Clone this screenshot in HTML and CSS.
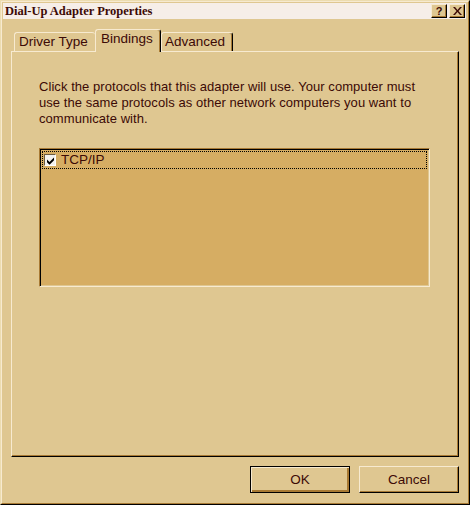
FILE: index.html
```html
<!DOCTYPE html>
<html>
<head>
<meta charset="utf-8">
<link rel="stylesheet" href="styles.css">
</head>
<body>
<div class="window">
  <div class="frame">
    <div class="titlebar">
      <span class="title">Dial-Up Adapter Properties</span>
      <div class="tbtns">
        <span class="tbtn help">?</span>
        <span class="tbtn close"><svg width="9" height="8" viewBox="0 0 9 8"><path d="M0 0h2l2.5 3 2.5-3h2l-3.5 4 3.5 4h-2l-2.5-3-2.5 3h-2l3.5-4z" fill="#3c0a06"/></svg></span>
      </div>
    </div>
    <div class="tabs">
      <div class="tab t1">Driver Type</div>
      <div class="tab sel">Bindings</div>
      <div class="tab t3">Advanced</div>
    </div>
    <div class="panel">
      <p class="desc">Click the protocols that this adapter will use. Your computer must use the same protocols as other network computers you want to communicate with.</p>
      <div class="listbox">
        <div class="item">
          <span class="check"><svg width="9" height="9" viewBox="0 0 9 9"><path d="M1 3.5l2.5 2.5 4.5-4.5v2.7l-4.5 4.5-2.5-2.5z" fill="#000"/></svg></span>
          <span class="label">TCP/IP</span>
        </div>
      </div>
    </div>
    <div class="buttons">
      <div class="btn default"><span>OK</span></div>
      <div class="btn"><span>Cancel</span></div>
    </div>
  </div>
</div>
</body>
</html>
```
FILE: styles.css
```css
html, body {
  margin: 0;
  padding: 0;
  background: #dfc791;
}
body {
  font-family: "Liberation Sans", Arial, sans-serif;
  font-size: 13px;
  color: #3c0a06;
}
.window {
  width: 470px;
  height: 505px;
  box-sizing: border-box;
  background: #dfc791;
  border-style: solid;
  border-width: 1px;
  border-color: #ecdcb0 #000 #000 #ecdcb0;
}
.frame {
  height: 100%;
  box-sizing: border-box;
  border-style: solid;
  border-width: 1px;
  border-color: #f7ead0 #a87a34 #a87a34 #f7ead0;
  padding: 1px;
  display: flex;
  flex-direction: column;
}
.titlebar {
  height: 16px;
  width: 463px;
  background: #f6eee8;
  display: flex;
  align-items: center;
  justify-content: space-between;
}
.title {
  font-family: "Liberation Serif", "Times New Roman", serif;
  font-weight: bold;
  font-size: 12.5px;
  color: #3c0a06;
  padding-left: 2px;
  line-height: 16px;
}
.tbtns {
  display: flex;
  gap: 2px;
  padding-right: 1px;
}
.tbtn {
  width: 16px;
  height: 14px;
  box-sizing: border-box;
  background: #dfc791;
  border-style: solid;
  border-width: 1px;
  border-color: #f7ead0 #000 #000 #f7ead0;
  box-shadow: inset -1px -1px 0 #a87a34;
  display: flex;
  align-items: center;
  justify-content: center;
  font-family: "Liberation Sans", Arial, sans-serif;
  font-weight: bold;
  font-size: 11px;
  line-height: 12px;
  color: #3c0a06;
}
.tabs {
  display: flex;
  align-items: flex-end;
  height: 32px;
  padding-left: 11px;
  position: relative;
  z-index: 2;
  font-size: 13.5px;
}
.tab {
  box-sizing: border-box;
  height: 19px;
  background: #dfc791;
  border-style: solid;
  border-width: 1px 1px 0 1px;
  border-color: #f7ead0 #000 transparent #f7ead0;
  border-radius: 3px 3px 0 0;
  box-shadow: inset -1px 0 0 #a87a34;
  padding: 1px 0 0 4px;
  line-height: 16px;
  white-space: nowrap;
}
.t1 {
  width: 81px;
  border-right: none;
  box-shadow: none;
}
.t3 {
  width: 72px;
  padding-left: 3px;
}
.sel {
  width: 66px;
  height: 23px;
  margin-bottom: -1px;
  padding: 1px 0 0 5px;
  line-height: 15px;
}
.panel {
  margin-left: 8px;
  width: 448px;
  height: 406px;
  box-sizing: border-box;
  border-style: solid;
  border-width: 1px;
  border-color: #f7ead0 #000 #000 #f7ead0;
  box-shadow: inset -1px -1px 0 #a87a34;
  padding: 27px 0 0 27px;
  position: relative;
  z-index: 1;
}
.desc {
  margin: 0;
  width: 394px;
  line-height: 16px;
  letter-spacing: 0.06px;
}
.listbox {
  margin-top: 21px;
  width: 391px;
  height: 139px;
  box-sizing: border-box;
  background: #d6ad63;
  border-style: solid;
  border-width: 1px;
  border-color: #a87a34 #f7ead0 #f7ead0 #a87a34;
  box-shadow: inset 1px 1px 0 #000, inset -1px -1px 0 #dfc791;
  padding: 2px 2px 0 2px;
}
.item {
  height: 18px;
  box-sizing: border-box;
  border: 1px dotted #000;
  display: flex;
  align-items: center;
  padding-left: 1px;
}
.check {
  width: 12px;
  height: 12px;
  box-sizing: border-box;
  background: #f4f2ee;
  border-style: solid;
  border-width: 1px;
  border-color: #6a5a40 #fff #fff #6a5a40;
  display: flex;
  align-items: center;
  justify-content: center;
}
.label {
  margin-left: 5px;
  line-height: 16px;
  font-size: 13.5px;
}
.buttons {
  display: flex;
  justify-content: flex-end;
  gap: 9px;
  margin-top: 9px;
  padding-right: 8px;
}
.btn {
  width: 100px;
  height: 27px;
  box-sizing: border-box;
  background: #dfc791;
  border-style: solid;
  border-width: 1px;
  border-color: #f7ead0 #000 #000 #f7ead0;
  box-shadow: inset -1px -1px 0 #a87a34;
  display: flex;
  align-items: center;
  justify-content: center;
  font-size: 13.5px;
}
.btn.default {
  border-color: #000;
  box-shadow: inset 1px 1px 0 #f7ead0, inset -2px -2px 0 #a87a34, inset -1px -1px 0 #000;
}
```
